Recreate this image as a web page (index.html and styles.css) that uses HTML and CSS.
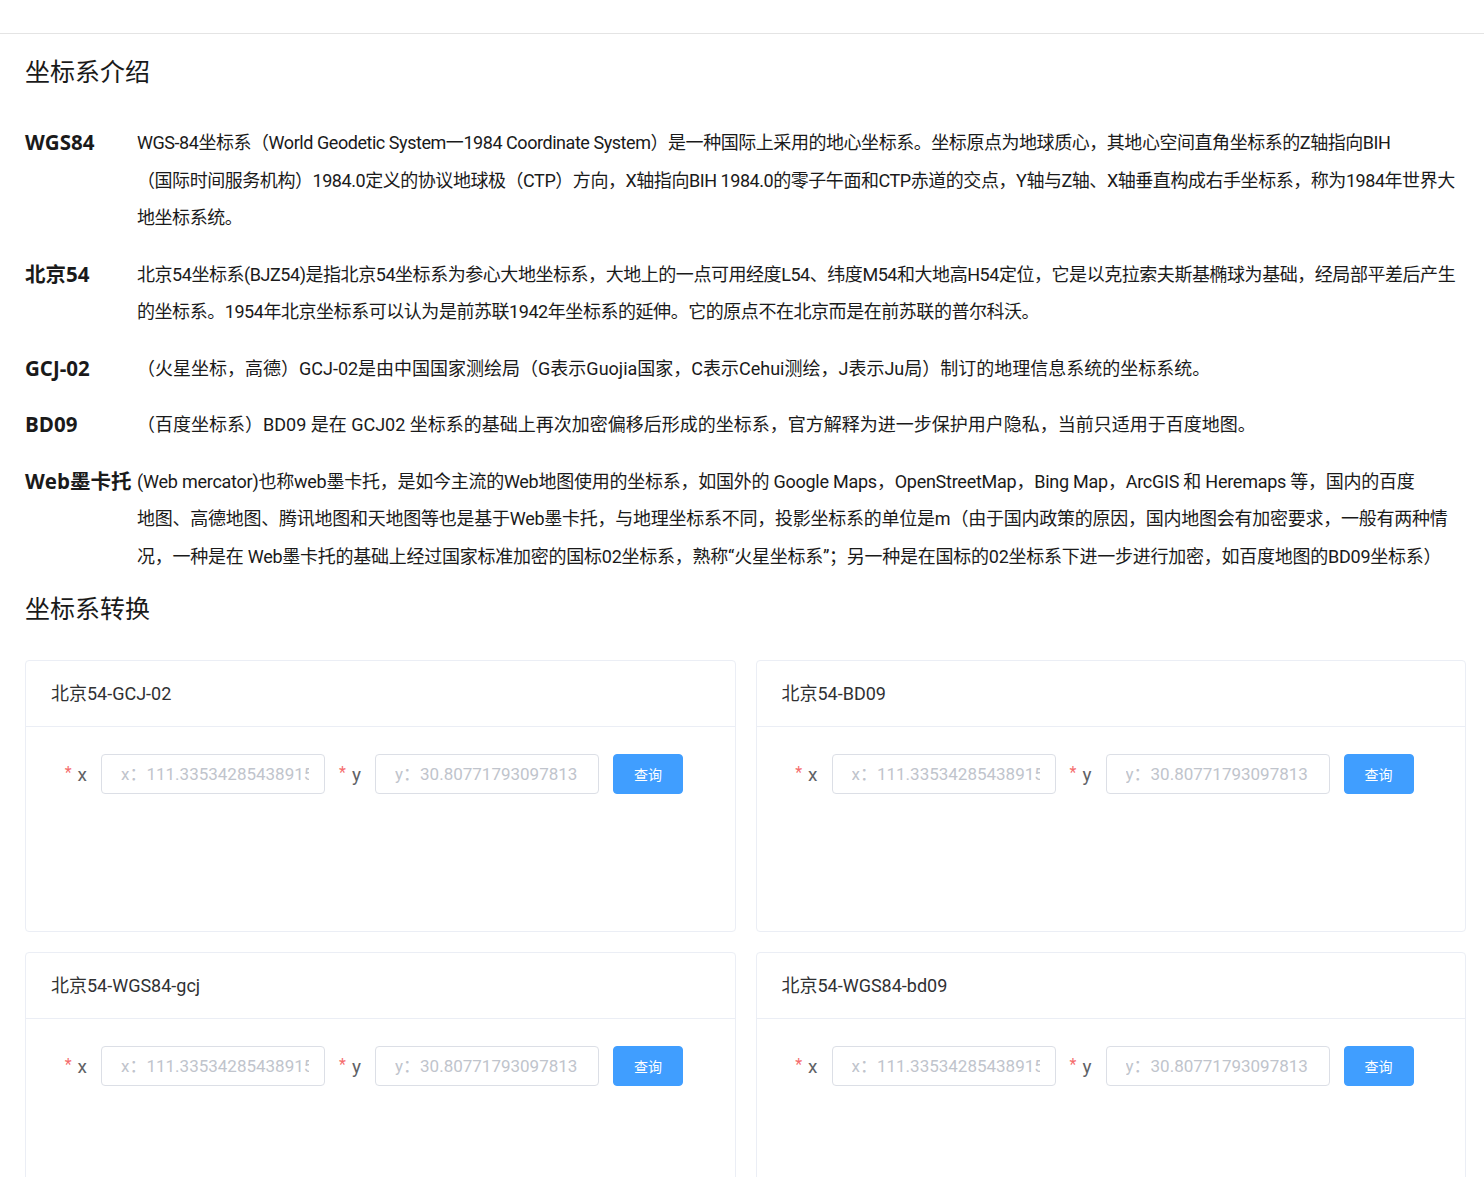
FILE: index.html
```html
<!DOCTYPE html>
<html lang="zh-CN">
<head>
<meta charset="utf-8">
<title>坐标系</title>
<link rel="stylesheet" href="styles.css">
</head>
<body>
<div class="topbar"></div>
<main class="page">
  <h2 class="title">坐标系介绍</h2>
  <div class="intro">
    <div class="item">
      <div class="term">WGS84</div>
      <div class="desc desc-tight">WGS-84坐标系（World Geodetic System一1984 Coordinate System）是一种国际上采用的地心坐标系。坐标原点为地球质心，其地心空间直角坐标系的Z轴指向BIH<br>（国际时间服务机构）1984.0定义的协议地球极（CTP）方向，X轴指向BIH 1984.0的零子午面和CTP赤道的交点，Y轴与Z轴、X轴垂直构成右手坐标系，称为1984年世界大<br>地坐标系统。</div>
    </div>
    <div class="item">
      <div class="term">北京54</div>
      <div class="desc desc-tight">北京54坐标系(BJZ54)是指北京54坐标系为参心大地坐标系，大地上的一点可用经度L54、纬度M54和大地高H54定位，它是以克拉索夫斯基椭球为基础，经局部平差后产生<br>的坐标系。1954年北京坐标系可以认为是前苏联1942年坐标系的延伸。它的原点不在北京而是在前苏联的普尔科沃。</div>
    </div>
    <div class="item">
      <div class="term">GCJ-02</div>
      <div class="desc">（火星坐标，高德）GCJ-02是由中国国家测绘局（G表示Guojia国家，C表示Cehui测绘，J表示Ju局）制订的地理信息系统的坐标系统。</div>
    </div>
    <div class="item">
      <div class="term">BD09</div>
      <div class="desc">（百度坐标系）BD09 是在 GCJ02 坐标系的基础上再次加密偏移后形成的坐标系，官方解释为进一步保护用户隐私，当前只适用于百度地图。</div>
    </div>
    <div class="item">
      <div class="term">Web墨卡托</div>
      <div class="desc desc-snug">(Web mercator)也称web墨卡托，是如今主流的Web地图使用的坐标系，如国外的 Google Maps，OpenStreetMap，Bing Map，ArcGIS 和 Heremaps 等，国内的百度<br>地图、高德地图、腾讯地图和天地图等也是基于Web墨卡托，与地理坐标系不同，投影坐标系的单位是m（由于国内政策的原因，国内地图会有加密要求，一般有两种情<br>况，一种是在 Web墨卡托的基础上经过国家标准加密的国标02坐标系，熟称“火星坐标系”；另一种是在国标的02坐标系下进一步进行加密，如百度地图的BD09坐标系）</div>
    </div>
  </div>
  <h2 class="title title-2">坐标系转换</h2>
  <div class="cards">
    <section class="card">
      <div class="card-header">北京54-GCJ-02</div>
      <div class="card-body">
        <form class="form">
          <label class="form-label"><span class="req">*</span>x</label>
          <input class="input" placeholder="x：111.335342854389159">
          <label class="form-label form-label-y"><span class="req">*</span>y</label>
          <input class="input" placeholder="y：30.80771793097813">
          <button type="button" class="btn">查询</button>
        </form>
      </div>
    </section>
    <section class="card">
      <div class="card-header">北京54-BD09</div>
      <div class="card-body">
        <form class="form">
          <label class="form-label"><span class="req">*</span>x</label>
          <input class="input" placeholder="x：111.335342854389159">
          <label class="form-label form-label-y"><span class="req">*</span>y</label>
          <input class="input" placeholder="y：30.80771793097813">
          <button type="button" class="btn">查询</button>
        </form>
      </div>
    </section>
    <section class="card">
      <div class="card-header">北京54-WGS84-gcj</div>
      <div class="card-body">
        <form class="form">
          <label class="form-label"><span class="req">*</span>x</label>
          <input class="input" placeholder="x：111.335342854389159">
          <label class="form-label form-label-y"><span class="req">*</span>y</label>
          <input class="input" placeholder="y：30.80771793097813">
          <button type="button" class="btn">查询</button>
        </form>
      </div>
    </section>
    <section class="card">
      <div class="card-header">北京54-WGS84-bd09</div>
      <div class="card-body">
        <form class="form">
          <label class="form-label"><span class="req">*</span>x</label>
          <input class="input" placeholder="x：111.335342854389159">
          <label class="form-label form-label-y"><span class="req">*</span>y</label>
          <input class="input" placeholder="y：30.80771793097813">
          <button type="button" class="btn">查询</button>
        </form>
      </div>
    </section>
  </div>
</main>
</body>
</html>
```
FILE: styles.css
```css
* { box-sizing: border-box; }
html, body { margin: 0; padding: 0; background: #fff; }
body {
  font-family: Roboto, "Noto Sans CJK SC", sans-serif;
  color: #1a1a1a;
}
.topbar {
  height: 34px;
  border-bottom: 1px solid #e4e4e4;
}
.page {
  padding: 0 18px 0 25px;
}
.title {
  margin: 21px 0 0;
  font-size: 25px;
  line-height: 36px;
  font-weight: 400;
  color: #1a1a1a;
}
.title-2 {
  margin-top: 17px;
}
.intro {
  margin-top: 33px;
}
.item {
  display: flex;
  margin-bottom: 19px;
}
.item:last-child { margin-bottom: 0; }
.term {
  flex: 0 0 112px;
  min-width: 0;
  font-family: "Open Sans", "Noto Sans CJK SC", sans-serif;
  font-size: 20.5px;
  font-weight: 700;
  line-height: 37.5px;
  white-space: nowrap;
}
.desc {
  flex: 1;
  min-width: 0;
  font-size: 18px;
  line-height: 37.5px;
}
.desc-tight {
  letter-spacing: -0.45px;
}
.desc-snug {
  letter-spacing: -0.25px;
}
.cards {
  margin-top: 32px;
  display: grid;
  grid-template-columns: 1fr 1fr;
  gap: 20px;
}
.card {
  border: 1px solid #ebeef5;
  border-radius: 4px;
  background: #fff;
  height: 272px;
}
.card-header {
  padding: 18px 25px;
  font-size: 18px;
  line-height: 29px;
  color: #303133;
  border-bottom: 1px solid #ebeef5;
}
.card-body {
  padding: 26px 20px;
}
.form {
  display: flex;
  align-items: center;
}
.form-label {
  width: 55px;
  text-align: right;
  padding-right: 14px;
  font-size: 19px;
  color: #606266;
  line-height: 40px;
}
.form-label-y {
  width: 40px;
  margin-left: 10px;
}
.req {
  color: #f56c6c;
  margin-right: 6px;
  font-size: 16px;
  vertical-align: 3px;
}
.input {
  width: 224px;
  height: 40px;
  border: 1px solid #dcdfe6;
  border-radius: 4px;
  padding: 0 15px 0 19px;
  font-family: inherit;
  font-size: 17px;
  color: #606266;
  outline: none;
}
.input::placeholder {
  color: #c0c4cc;
}
.btn {
  margin-left: 14px;
  width: 70px;
  height: 40px;
  border: 1px solid #409eff;
  background: #409eff;
  color: #fff;
  border-radius: 4px;
  font-family: inherit;
  font-size: 14px;
  padding: 0;
}
```
